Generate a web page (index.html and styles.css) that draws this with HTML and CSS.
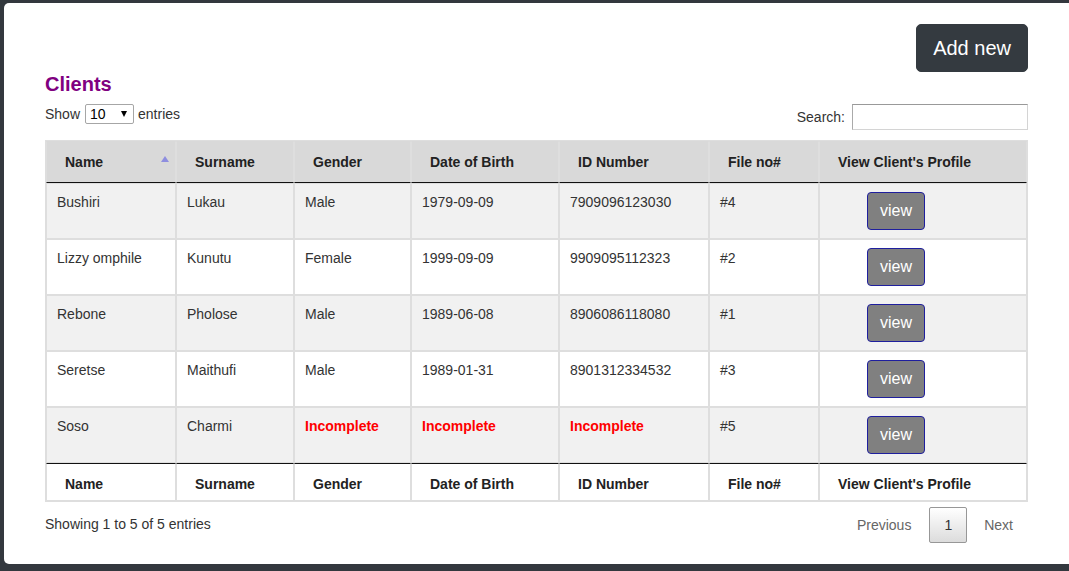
FILE: index.html
```html
<!DOCTYPE html>
<html lang="en">
<head>
<meta charset="utf-8">
<title>Clients</title>
<link rel="stylesheet" href="styles.css">
</head>
<body>
<div class="modal">
  <div class="top-actions">
    <button class="btn-add" type="button">Add new</button>
  </div>
  <h2 class="title">Clients</h2>
  <div class="controls">
    <div class="length">
      <span>Show</span>
      <span class="select-wrap">
        <select class="select"><option>10</option><option>25</option><option>50</option><option>100</option></select>
        <span class="select-arrow"></span>
      </span>
      <span>entries</span>
    </div>
    <label class="filter">Search:<input class="search" type="search"></label>
  </div>
  <table class="grid">
    <colgroup>
      <col class="c1"><col class="c2"><col class="c3"><col class="c4"><col class="c5"><col class="c6"><col class="c7">
    </colgroup>
    <thead>
      <tr>
        <th class="sorted">Name<span class="sort-asc"></span></th>
        <th>Surname</th>
        <th>Gender</th>
        <th>Date of Birth</th>
        <th>ID Number</th>
        <th>File no#</th>
        <th>View Client's Profile</th>
      </tr>
    </thead>
    <tbody>
      <tr class="odd">
        <td>Bushiri</td><td>Lukau</td><td>Male</td><td>1979-09-09</td><td>7909096123030</td><td>#4</td>
        <td class="view-cell"><button class="btn-view" type="button">view</button></td>
      </tr>
      <tr class="even">
        <td>Lizzy omphile</td><td>Kunutu</td><td>Female</td><td>1999-09-09</td><td>9909095112323</td><td>#2</td>
        <td class="view-cell"><button class="btn-view" type="button">view</button></td>
      </tr>
      <tr class="odd">
        <td>Rebone</td><td>Pholose</td><td>Male</td><td>1989-06-08</td><td>8906086118080</td><td>#1</td>
        <td class="view-cell"><button class="btn-view" type="button">view</button></td>
      </tr>
      <tr class="even">
        <td>Seretse</td><td>Maithufi</td><td>Male</td><td>1989-01-31</td><td>8901312334532</td><td>#3</td>
        <td class="view-cell"><button class="btn-view" type="button">view</button></td>
      </tr>
      <tr class="odd">
        <td>Soso</td><td>Charmi</td><td class="incomplete">Incomplete</td><td class="incomplete">Incomplete</td><td class="incomplete">Incomplete</td><td>#5</td>
        <td class="view-cell"><button class="btn-view" type="button">view</button></td>
      </tr>
    </tbody>
    <tfoot>
      <tr>
        <th>Name</th>
        <th>Surname</th>
        <th>Gender</th>
        <th>Date of Birth</th>
        <th>ID Number</th>
        <th>File no#</th>
        <th>View Client's Profile</th>
      </tr>
    </tfoot>
  </table>
  <div class="table-footer">
    <div class="info">Showing 1 to 5 of 5 entries</div>
    <div class="paginate">
      <span class="page-btn disabled prev">Previous</span>
      <span class="page-btn current">1</span>
      <span class="page-btn disabled">Next</span>
    </div>
  </div>
</div>
</body>
</html>
```

FILE: styles.css
```css
html, body {
  margin: 0;
  padding: 0;
  background: #33383e;
  height: 100%;
  overflow: hidden;
}

body {
  padding: 3px 0 0 4px;
  box-sizing: border-box;
  font-family: "Liberation Sans", Arial, sans-serif;
  font-size: 14px;
  line-height: 20px;
  color: #333;
}

.modal {
  background: #fff;
  border-radius: 5px 0 0 5px;
  padding: 21px 41px 21px 41px;
}

.top-actions {
  display: flex;
  justify-content: flex-end;
}

.btn-add {
  font-family: "Liberation Sans", Arial, sans-serif;
  font-size: 20px;
  line-height: 30px;
  height: 48px;
  padding: 8px 16px;
  background: #343a40;
  color: #fff;
  border: 1px solid #343a40;
  border-radius: 5px;
  cursor: pointer;
}

.title {
  margin: 0;
  font-size: 20px;
  line-height: 24px;
  font-weight: bold;
  color: #800080;
}

.controls {
  margin-top: 8px;
  display: flex;
  justify-content: space-between;
  align-items: flex-start;
}

.length {
  display: flex;
  align-items: center;
  height: 20px;
}

.select-wrap {
  position: relative;
  display: inline-block;
  margin: 0 4px 0 5px;
  height: 20px;
}

.select {
  -webkit-appearance: none;
  appearance: none;
  width: 49px;
  height: 20px;
  box-sizing: border-box;
  border: 1px solid #a6a6a6;
  border-radius: 2px;
  background: #fff;
  padding: 0 0 0 4px;
  font-family: "Liberation Sans", Arial, sans-serif;
  font-size: 14px;
  line-height: 18px;
  color: #000;
  display: block;
}

.select-arrow {
  position: absolute;
  right: 7px;
  top: 7px;
  width: 0;
  height: 0;
  border-left: 3.5px solid transparent;
  border-right: 3.5px solid transparent;
  border-top: 6px solid #000;
  pointer-events: none;
}

.filter {
  display: flex;
  align-items: center;
  height: 26px;
  color: #333;
}

.search {
  margin-left: 7px;
  width: 176px;
  height: 26px;
  box-sizing: border-box;
  border: 1px solid #d4d4d4;
  border-top-color: #999;
  border-left-color: #aaa;
  padding: 2px 4px;
  font-family: "Liberation Sans", Arial, sans-serif;
  font-size: 14px;
  outline: none;
}

.grid {
  margin-top: 10px;
  width: 983px;
  table-layout: fixed;
  border-collapse: separate;
  border-spacing: 0;
  border: 1px solid #dedede;
}

.c1 { width: 130px; }
.c2 { width: 118px; }
.c3 { width: 117px; }
.c4 { width: 148px; }
.c5 { width: 150px; }
.c6 { width: 110px; }
.c7 { width: 208px; }

.grid th,
.grid td {
  border: 1px solid #dedede;
  text-align: left;
  vertical-align: top;
}

.grid thead th {
  background: #d9d9d9;
  padding: 10px 18px;
  font-weight: bold;
  color: #222;
  border-bottom: 1px solid #111;
  border-top-color: #d9d9d9;
  position: relative;
}

.sort-asc {
  position: absolute;
  right: 6px;
  top: 14px;
  width: 0;
  height: 0;
  border-left: 4.5px solid transparent;
  border-right: 4.5px solid transparent;
  border-bottom: 6px solid #8e8edf;
}

.grid tbody td {
  padding: 8px 10px;
  color: #333;
}

.grid tbody tr.odd td {
  background: #f1f1f1;
}

.grid tbody tr.even td {
  background: #fff;
}

.grid td.incomplete {
  color: #f00;
  font-weight: bold;
}

.grid td.view-cell {
  padding-left: 47px;
}

.btn-view {
  display: block;
  height: 38px;
  padding: 6px 12px;
  box-sizing: border-box;
  background: #808080;
  color: #fff;
  border: 1px solid #1f1f9e;
  border-radius: 4px;
  font-family: "Liberation Sans", Arial, sans-serif;
  font-size: 16px;
  line-height: 24px;
  cursor: pointer;
}

.grid tfoot th {
  padding: 10px 18px 6px 18px;
  font-weight: bold;
  color: #222;
  border-top: 1px solid #111;
  background: #fff;
}

.table-footer {
  display: flex;
  justify-content: space-between;
  align-items: flex-start;
}

.info {
  padding-top: 12px;
  color: #333;
}

.paginate {
  padding-top: 5px;
  display: flex;
}

.page-btn {
  display: inline-block;
  padding: 7px 14px;
  margin-left: 2px;
  border: 1px solid transparent;
  border-radius: 2px;
  color: #333;
  line-height: 20px;
}

.page-btn.disabled {
  color: #666;
}

.page-btn.prev {
  margin-right: 1px;
}

.page-btn.current {
  border-color: #979797;
  background: linear-gradient(to bottom, #fff 0%, #dcdcdc 100%);
  color: #333;
}
```
